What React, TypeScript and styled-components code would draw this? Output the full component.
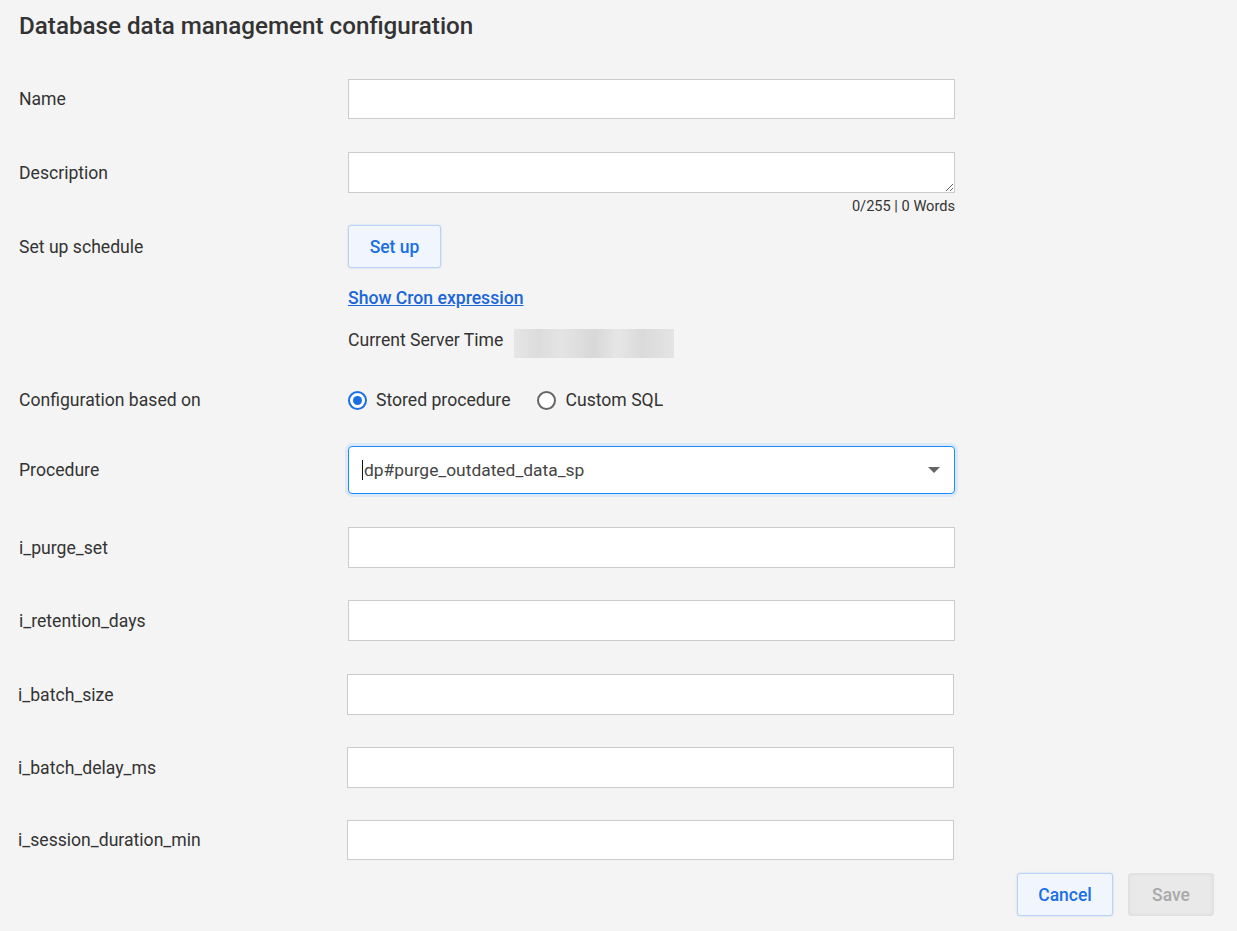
import React from "react";
import styled, { createGlobalStyle } from "styled-components";

const GlobalStyle = createGlobalStyle`
    html, body {
        margin: 0;
        padding: 0;
        background: #f4f4f4;
    }
    body {
        font-family: Roboto, "Liberation Sans", Arial, sans-serif;
        color: #333;
    }
    * {
        box-sizing: border-box;
    }
`;

const Page = styled.div`
    width: 1237px;
    min-height: 931px;
    padding: 12px 0 0 19px;
    display: flex;
    flex-direction: column;
`;

const Title = styled.h1`
    margin: 0;
    font-size: 24.2px;
    line-height: 28px;
    font-weight: 500;
    color: #333;
`;

const Row = styled.div<{ $top: number; $shift?: number }>`
    display: grid;
    grid-template-columns: 329px 607px;
    align-items: center;
    margin-top: ${p => p.$top}px;
    margin-left: ${p => -(p.$shift || 0)}px;
`;

const Label = styled.label`
    font-size: 17.6px;
    line-height: 20px;
    color: #333;
`;

const TextInput = styled.input`
    display: block;
    width: 607px;
    height: ${p => (p.height ? `${p.height}px` : "41px")};
    border: 1px solid #cbcbcb;
    background: #fff;
    border-radius: 0;
    padding: 0 12px;
    font: inherit;
    outline: none;
`;

const TextArea = styled.textarea`
    display: block;
    width: 607px;
    height: 41px;
    border: 1px solid #cbcbcb;
    background: #fff;
    border-radius: 0;
    padding: 8px 12px;
    font: inherit;
    outline: none;
    resize: vertical;
`;

const Counter = styled.div`
    grid-column: 2;
    text-align: right;
    font-size: 14.6px;
    line-height: 16px;
    color: #333;
    margin-top: 5px;
`;

const Button = styled.button<{ $disabled?: boolean; $width: number }>`
    width: ${p => p.$width}px;
    height: 43px;
    border-radius: 3px;
    font-family: Roboto, "Liberation Sans", Arial, sans-serif;
    font-size: 17.5px;
    font-weight: 500;
    cursor: pointer;
    border: 1px solid ${p => (p.$disabled ? "#e0e0e0" : "#b9d3f7")};
    background: ${p => (p.$disabled ? "#e9e9e9" : "#f1f6fe")};
    color: ${p => (p.$disabled ? "#a9a9a9" : "#1a6fe6")};
    box-shadow: ${p =>
        p.$disabled ? "inset 0 0 4px rgba(0,0,0,0.06)" : "0 0 2px rgba(26,111,230,0.25)"};
`;

const Indented = styled.div<{ $top: number }>`
    margin-top: ${p => p.$top}px;
    margin-left: 329px;
    display: flex;
    align-items: flex-start;
`;

const CronLink = styled.a`
    font-size: 17.6px;
    line-height: 20px;
    font-weight: 500;
    color: #1a66d9;
    text-decoration: underline;
    cursor: pointer;
`;

const ServerLabel = styled.span`
    font-size: 17.6px;
    line-height: 22px;
    color: #333;
    margin-right: 11px;
`;

const BlurredTime = styled.div`
    width: 160px;
    height: 29px;
    background: linear-gradient(
        to right,
        #e6e6e6 0%,
        #dcdcdc 15%,
        #e4e4e4 30%,
        #d8d8d8 50%,
        #e6e6e6 65%,
        #dadada 80%,
        #e4e4e4 100%
    );
`;

const RadioGroup = styled.div`
    display: flex;
    align-items: center;
    gap: 27px;
`;

const RadioOption = styled.label`
    display: flex;
    align-items: center;
    gap: 9px;
    font-size: 17.6px;
    line-height: 20px;
    color: #333;
    cursor: pointer;
`;

const RadioCircle = styled.span<{ $checked?: boolean }>`
    width: 19px;
    height: 19px;
    border-radius: 50%;
    border: 2px solid ${p => (p.$checked ? "#1a6fe6" : "#666")};
    display: flex;
    align-items: center;
    justify-content: center;
    background: #fff;
    &::after {
        content: "";
        width: 9px;
        height: 9px;
        border-radius: 50%;
        background: ${p => (p.$checked ? "#1a6fe6" : "transparent")};
    }
`;

const SelectBox = styled.div`
    width: 607px;
    height: 48px;
    border: 1px solid #1a8cff;
    border-radius: 4px;
    background: #fff;
    box-shadow: 0 0 0 3px #dce9f8;
    display: flex;
    align-items: center;
    padding: 0 14px 0 13px;
    font-size: 17.4px;
    color: #444;
`;

const Caret = styled.span`
    width: 1px;
    height: 20px;
    background: #111;
    margin-right: 1px;
`;

const SelectValue = styled.span`
    flex: 1;
`;

const Actions = styled.div`
    margin-top: 13px;
    width: 1195px;
    display: flex;
    justify-content: flex-end;
    gap: 15px;
`;

const fields = [
    { name: "i_purge_set", top: 33, shift: 0, height: 41 },
    { name: "i_retention_days", top: 32, shift: 0, height: 41 },
    { name: "i_batch_size", top: 33, shift: 1, height: 41 },
    { name: "i_batch_delay_ms", top: 32, shift: 1, height: 41 },
    { name: "i_session_duration_min", top: 32, shift: 1, height: 40 }
];

export default function App() {
    return (
        <React.Fragment>
            <GlobalStyle />
            <Page>
                <Title>Database data management configuration</Title>

                <Row $top={39}>
                    <Label>Name</Label>
                    <TextInput height={40} />
                </Row>

                <Row $top={33}>
                    <Label>Description</Label>
                    <TextArea />
                    <Counter>0/255 | 0 Words</Counter>
                </Row>

                <Row $top={11}>
                    <Label>Set up schedule</Label>
                    <div>
                        <Button $width={93}>Set up</Button>
                    </div>
                </Row>

                <Indented $top={20}>
                    <CronLink>Show Cron expression</CronLink>
                </Indented>

                <Indented $top={21}>
                    <ServerLabel>Current Server Time</ServerLabel>
                    <BlurredTime />
                </Indented>

                <Row $top={32}>
                    <Label>Configuration based on</Label>
                    <RadioGroup>
                        <RadioOption>
                            <RadioCircle $checked />
                            Stored procedure
                        </RadioOption>
                        <RadioOption>
                            <RadioCircle />
                            Custom SQL
                        </RadioOption>
                    </RadioGroup>
                </Row>

                <Row $top={36}>
                    <Label>Procedure</Label>
                    <SelectBox>
                        <Caret />
                        <SelectValue>dp#purge_outdated_data_sp</SelectValue>
                        <svg width="12" height="6" viewBox="0 0 12 6">
                            <path d="M0 0 L12 0 L6 6 Z" fill="#666" />
                        </svg>
                    </SelectBox>
                </Row>

                {fields.map(f => (
                    <Row $top={f.top} $shift={f.shift} key={f.name}>
                        <Label>{f.name}</Label>
                        <TextInput height={f.height} />
                    </Row>
                ))}

                <Actions>
                    <Button $width={96}>Cancel</Button>
                    <Button $width={86} $disabled>
                        Save
                    </Button>
                </Actions>
            </Page>
        </React.Fragment>
    );
}
